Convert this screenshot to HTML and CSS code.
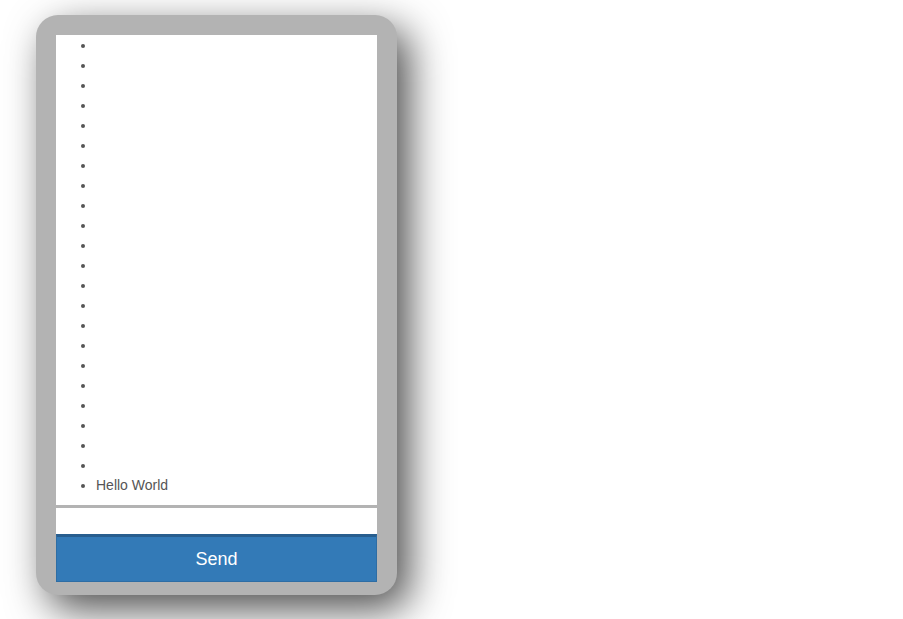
FILE: index.html
```html
<!DOCTYPE html>
<html>
<head>
<meta charset="utf-8">
<link rel="stylesheet" href="styles.css">
</head>
<body>
<div class="page">
  <div class="device">
    <div class="screen">
      <ul class="messages">
        <li></li><li></li><li></li><li></li><li></li><li></li>
        <li></li><li></li><li></li><li></li><li></li><li></li>
        <li></li><li></li><li></li><li></li><li></li><li></li>
        <li></li><li></li><li></li><li></li>
        <li>Hello World</li>
      </ul>
    </div>
    <input class="msg-input" type="text">
    <button class="send-btn">Send</button>
  </div>
</div>
</body>
</html>
```
FILE: styles.css
```css
html, body {
  margin: 0;
  padding: 0;
  background: #fff;
  font-family: "Liberation Sans", Arial, sans-serif;
  font-size: 14px;
  line-height: 20px;
  color: #555;
}
html, body {
  height: 100%;
}
.page {
  box-sizing: border-box;
  min-height: 100%;
  padding: 15px 0 0 36px;
}
.device {
  box-sizing: border-box;
  width: 361px;
  height: 580px;
  padding: 20px 20px 13px 20px;
  background: #b3b3b3;
  border-radius: 22px;
  box-shadow: 12px 14px 40px rgba(0, 0, 0, 0.7);
  display: flex;
  flex-direction: column;
}
.screen {
  background: #fff;
  height: 470px;
  overflow: hidden;
}
.messages {
  margin: 0;
  padding-left: 40px;
}
.messages li {
  height: 20px;
}
.msg-input {
  display: block;
  box-sizing: border-box;
  width: 100%;
  height: 29px;
  margin: 0;
  border: none;
  border-top: 3px solid #b3b3b3;
  background: #fff;
  outline: none;
  padding: 0 6px;
}
.send-btn {
  display: block;
  box-sizing: border-box;
  width: 100%;
  height: 48px;
  margin: 0;
  border: 1px solid #2e6da4;
  border-top: 3px solid #285e8e;
  background: #337ab7;
  color: #fff;
  font-family: "Liberation Sans", Arial, sans-serif;
  font-size: 18px;
  line-height: 24px;
  padding: 0;
}
```
